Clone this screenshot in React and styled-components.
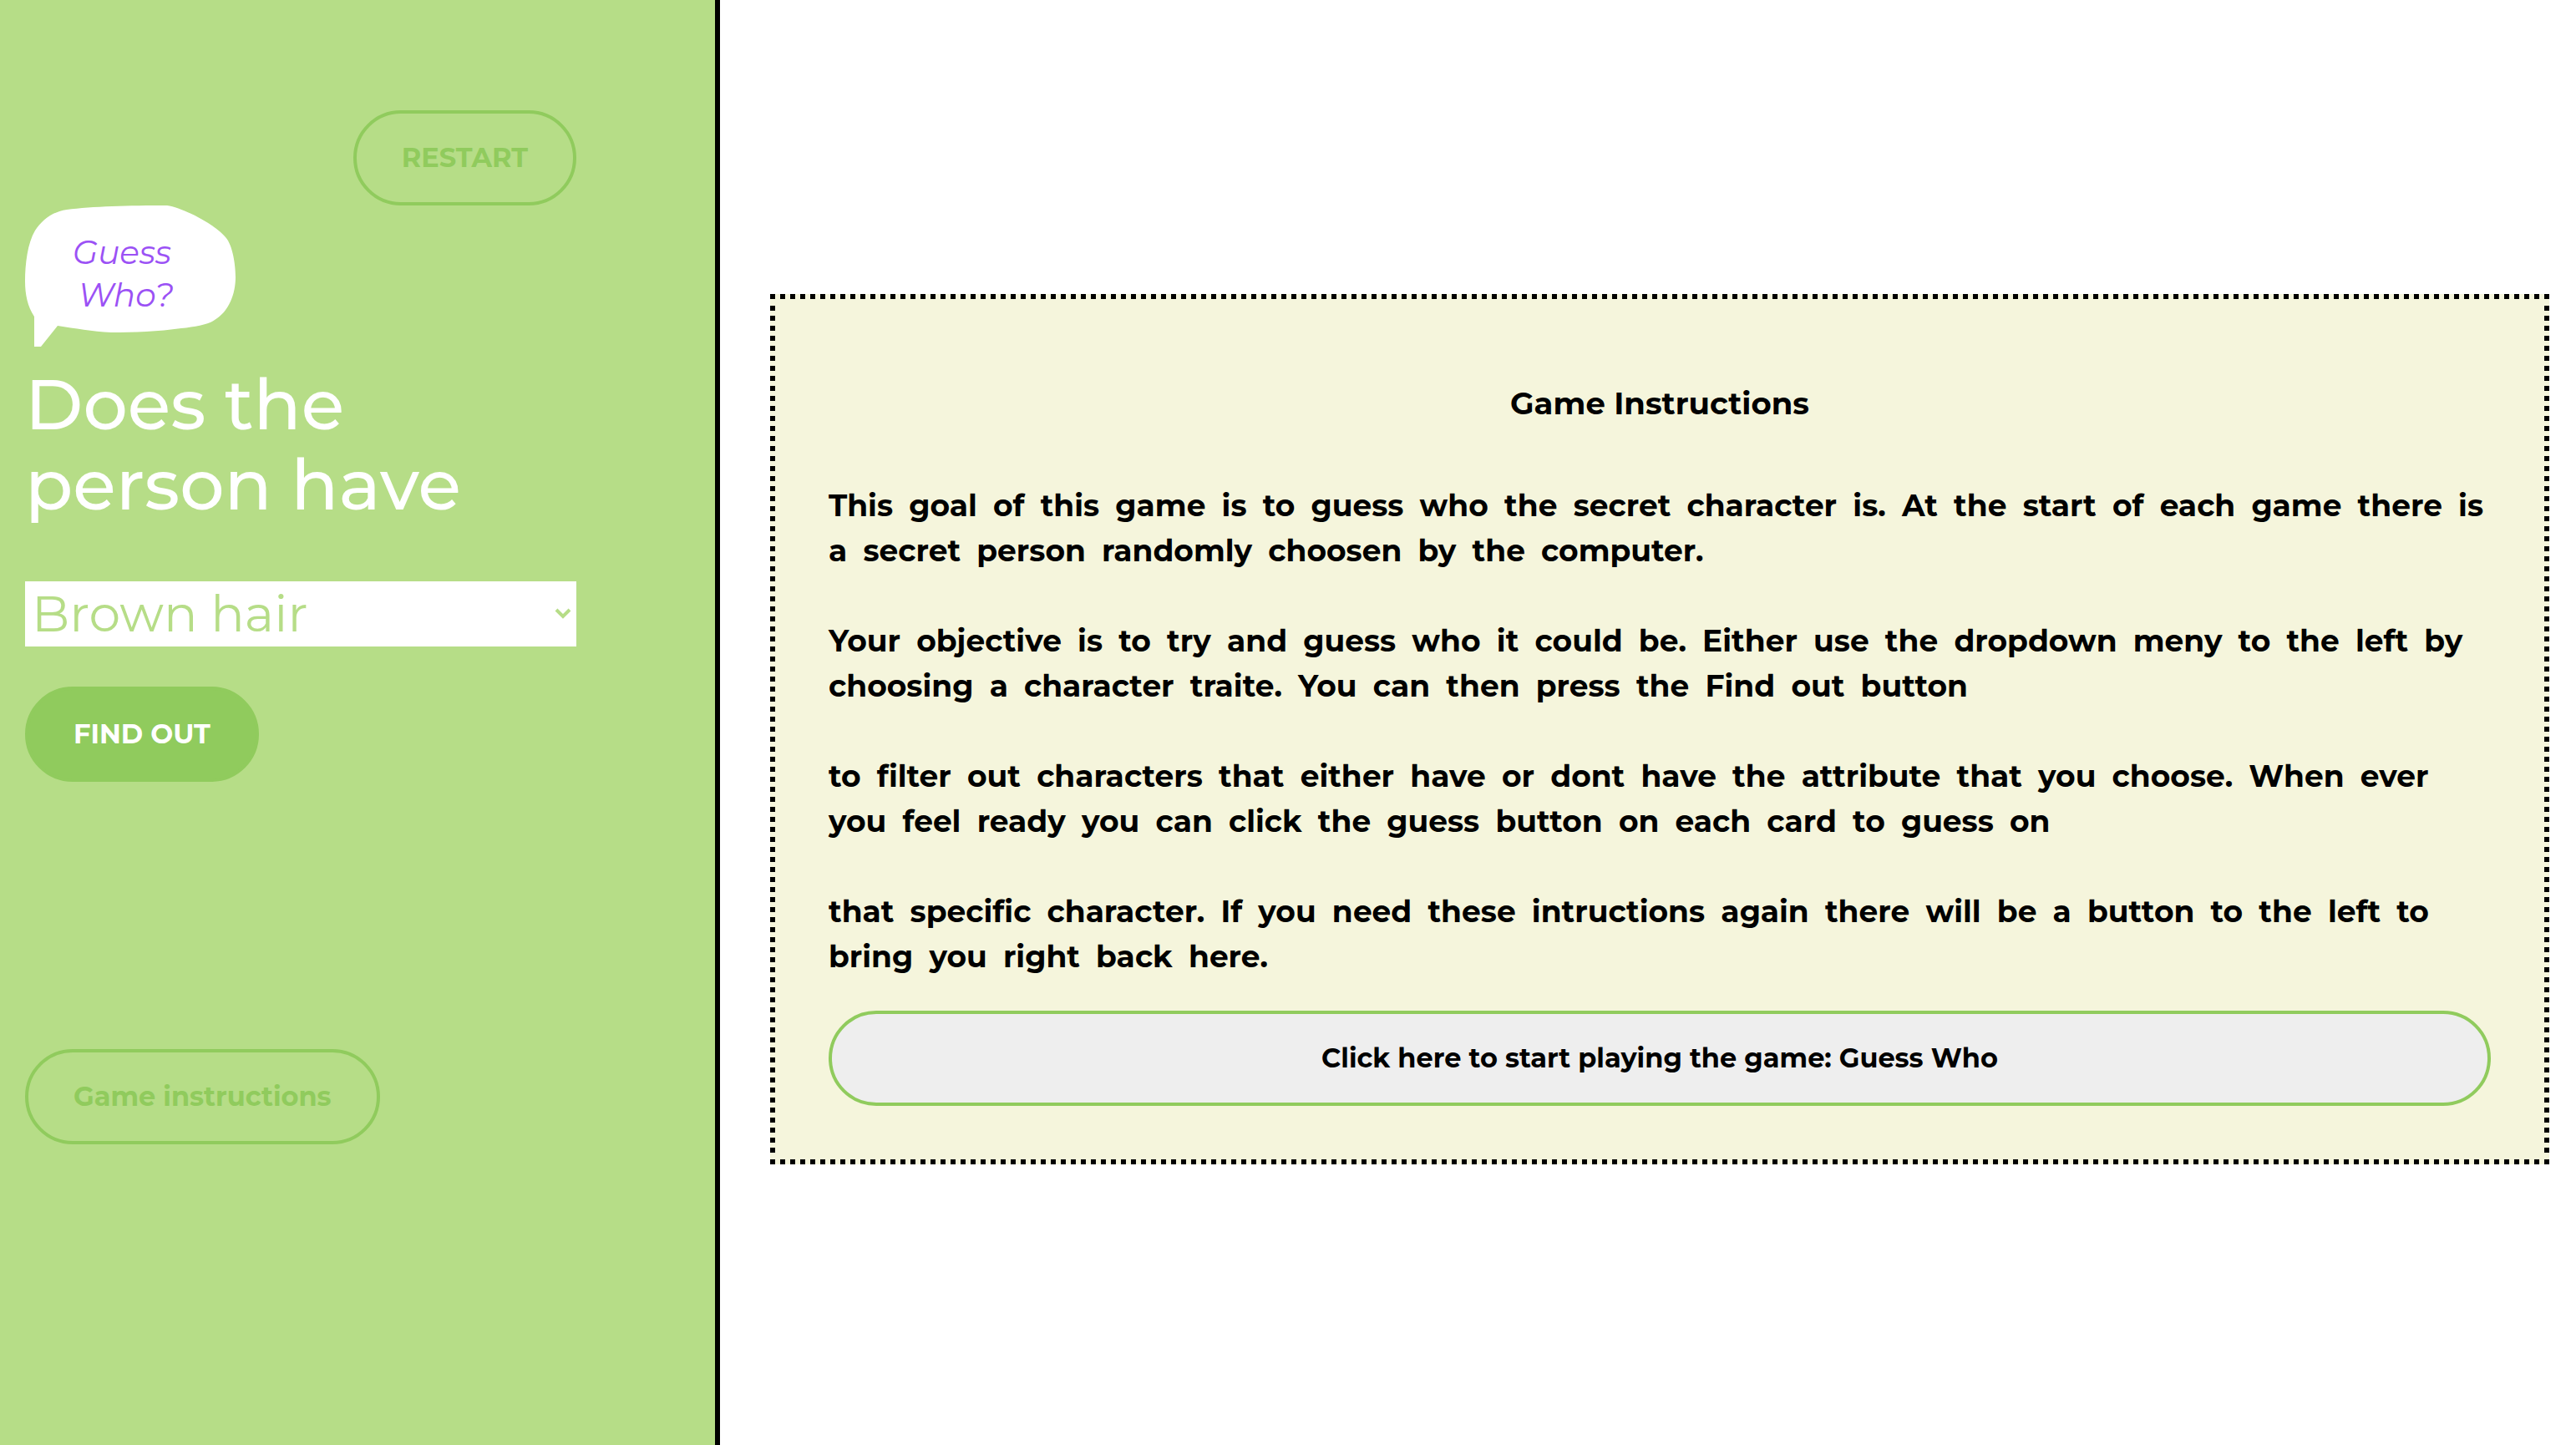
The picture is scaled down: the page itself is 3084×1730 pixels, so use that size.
import React, { useState } from "react";
import styled, { createGlobalStyle, css } from "styled-components";

const GlobalStyle = createGlobalStyle`
  *, *::before, *::after { box-sizing: border-box; }
  body {
    margin: 0;
    background: #fff;
    color: #000;
    font-family: Montserrat, Inter, "Open Sans", sans-serif;
  }
  h1, h2, p { margin: 0; }
`;

const Page = styled.div`
  display: grid;
  grid-template-columns: 431fr 1111fr;
  min-height: 100vh;
`;

const Sidebar = styled.aside`
  display: flex;
  flex-direction: column;
  align-items: flex-start;
  padding: 132px 166px 60px 30px;
  background: #b6dd87;
  border-right: 6px solid #000;
`;

const Pill = styled.button`
  height: 114px;
  padding: 0 54px;
  border: 4px solid #90cb5d;
  border-radius: 60px;
  background: transparent;
  color: #90cb5d;
  font-family: inherit;
  font-size: 32px;
  font-weight: 700;
  line-height: 40px;
  cursor: pointer;
  ${(p) =>
    p.$filled &&
    css`
      background: #90cb5d;
      color: #fff;
    `}
  ${(p) =>
    p.$wide &&
    css`
      width: 100%;
      background: #eee;
      color: #000;
    `}
`;

const TopBar = styled.div`
  display: flex;
  justify-content: flex-end;
  width: 100%;
`;

const Logo = styled.svg`
  display: block;
  width: 254px;
  height: 170px;
`;

const Form = styled.form`
  display: flex;
  flex-direction: column;
  align-items: flex-start;
  width: 100%;
  margin-top: 20px;
`;

const Question = styled.h1`
  color: #fff;
  font-size: 84px;
  font-weight: 500;
  line-height: 96px;
`;

const SelectBox = styled.div`
  position: relative;
  width: 100%;
  margin: 68px 0 48px;
`;

const Select = styled.select`
  display: block;
  width: 100%;
  height: 78px;
  padding: 0 48px 0 8px;
  border: 0;
  border-radius: 0;
  appearance: none;
  background: #fff;
  color: #b6dd87;
  font-family: inherit;
  font-size: 60px;
  font-weight: 400;
  line-height: 78px;
`;

const Chevron = styled.svg`
  position: absolute;
  top: 32px;
  right: 6px;
  width: 20px;
  height: 14px;
  pointer-events: none;
`;

const SidebarFooter = styled.div`
  margin-top: 320px;
`;

const Main = styled.main`
  display: flex;
  flex-direction: column;
  justify-content: center;
  padding: 16px 32px 0 60px;
`;

const Panel = styled.section`
  position: relative;
  padding: 70px;
  background: #f5f5dc;
`;

const PanelTitle = styled.h2`
  padding: 34px 0 68px;
  font-size: 37px;
  font-weight: 700;
  line-height: 54px;
  text-align: center;
`;

const Instructions = styled.div`
  display: flex;
  flex-direction: column;
  gap: 54px;
  margin-bottom: 38px;
  font-size: 36px;
  font-weight: 700;
  line-height: 54px;
  word-spacing: 9px;
  font-variant-ligatures: none;
`;

/* Square dots along the edges; the side rows start clear of the corner dots. */
const DottedFrame = styled.div`
  position: absolute;
  inset: 0;
  pointer-events: none;
  background:
    repeating-linear-gradient(90deg, #000 0 6px, transparent 6px 12px) top / 100% 6px no-repeat,
    repeating-linear-gradient(90deg, #000 0 6px, transparent 6px 12px) bottom / 100% 6px no-repeat,
    repeating-linear-gradient(180deg, #000 0 6px, transparent 6px 12px) left 0 top 14px / 6px calc(100% - 28px) no-repeat,
    repeating-linear-gradient(180deg, #000 0 6px, transparent 6px 12px) right 0 top 14px / 6px calc(100% - 28px) no-repeat;
`;

const TRAITS = ["Brown hair", "Yellow hair", "Glasses", "Hat"];

const PARAGRAPHS = [
  [
    "This goal of this game is to guess who the secret character is. At the start of each game there is",
    "a secret person randomly choosen by the computer.",
  ],
  [
    "Your objective is to try and guess who it could be. Either use the dropdown meny to the left by",
    "choosing a character traite. You can then press the Find out button",
  ],
  [
    "to filter out characters that either have or dont have the attribute that you choose. When ever",
    "you feel ready you can click the guess button on each card to guess on",
  ],
  [
    "that specific character. If you need these intructions again there will be a button to the left to",
    "bring you right back here.",
  ],
];

function SpeechLogo() {
  return (
    <Logo viewBox="0 0 254 170" role="img" aria-label="Guess Who?">
      <path
        fill="#fff"
        d="M50 5 C80 1 125 0 170 0 C190 3 228 23 240 38 C249 48 252 72 252 86 C252 106 244 127 227 137 C218 143 204 145 187 147 C160 151 130 152 103 152 C80 151 60 147 39 144 L19 169 L11 169 L11 133 C3 121 0 106 0 91 C0 70 3 45 12 30 C20 18 31 8 50 5 Z"
      />
      <g fill="#9b51f5" fontSize="39" fontStyle="italic" fontWeight="400">
        <text x="57" y="70">Guess</text>
        <text x="64" y="121">Who?</text>
      </g>
    </Logo>
  );
}

export default function App() {
  const [trait, setTrait] = useState(TRAITS[0]);
  return (
    <>
      <GlobalStyle />
      <Page>
        <Sidebar>
          <TopBar>
            <Pill type="button">RESTART</Pill>
          </TopBar>
          <SpeechLogo />
          <Form onSubmit={(e) => e.preventDefault()}>
            <Question>
              <label htmlFor="trait">
                Does the
                <br />
                person have
              </label>
            </Question>
            <SelectBox>
              <Select id="trait" value={trait} onChange={(e) => setTrait(e.target.value)}>
                {TRAITS.map((t) => (
                  <option key={t}>{t}</option>
                ))}
              </Select>
              <Chevron viewBox="0 0 20 14" aria-hidden="true">
                <path d="M2 2 L10 10 L18 2" fill="none" stroke="#b6dd87" strokeWidth="4" />
              </Chevron>
            </SelectBox>
            <Pill type="submit" $filled>
              FIND OUT
            </Pill>
          </Form>
          <SidebarFooter>
            <Pill type="button">Game instructions</Pill>
          </SidebarFooter>
        </Sidebar>
        <Main>
          <Panel>
            <PanelTitle>Game Instructions</PanelTitle>
            <Instructions>
              {PARAGRAPHS.map(([first, second]) => (
                <p key={first}>
                  {first}
                  <br />
                  {second}
                </p>
              ))}
            </Instructions>
            <Pill type="button" $wide>
              Click here to start playing the game: Guess Who
            </Pill>
            <DottedFrame />
          </Panel>
        </Main>
      </Page>
    </>
  );
}
